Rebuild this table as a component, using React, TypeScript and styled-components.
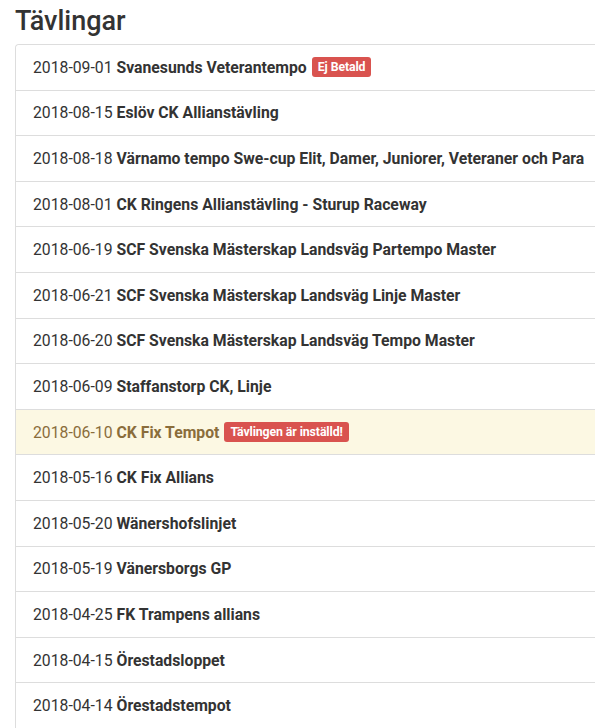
import styled, { createGlobalStyle } from 'styled-components';

const GlobalStyle = createGlobalStyle`
    html, body {
        margin: 0;
        padding: 0;
        background: #fff;
    }
    body {
        font-family: Roboto, "Liberation Sans", sans-serif;
        color: #333;
        overflow: hidden;
    }
`;

const Page = styled.div`
    padding-left: 15px;
    overflow: hidden;
`;

const Title = styled.h2`
    margin: 0;
    padding-top: 1px;
    height: 43px;
    font-size: 27px;
    font-weight: 500;
    line-height: 40px;
    color: #333;
`;

// list runs past the right edge of the window, like in the screenshot
const List = styled.div`
    margin-right: -20px;
    border: 1px solid #ddd;
    border-bottom: none;
    border-radius: 4px 4px 0 0;
`;

const Item = styled.div<{ $warning?: boolean }>`
    display: flex;
    align-items: center;
    gap: 4px;
    height: 44.6px;
    padding: 0 17px;
    border-top: 1px solid #ddd;
    font-size: 15.75px;
    white-space: nowrap;
    background: ${p => (p.$warning ? '#fcf8e3' : '#fff')};
    color: ${p => (p.$warning ? '#8a6d3b' : '#333')};

    &:first-child {
        border-top: none;
        border-radius: 4px 4px 0 0;
    }
`;

const Date = styled.span`
    font-weight: 400;
`;

const Name = styled.strong`
    font-weight: 700;
`;

const Label = styled.span`
    display: inline-block;
    margin-left: 1px;
    padding: 3px 6px;
    border-radius: 3px;
    background: #d9534f;
    color: #fff;
    font-size: 12.3px;
    font-weight: 700;
    letter-spacing: -0.1px;
    line-height: 14px;
`;

interface Race {
    date: string;
    name: string;
    label?: string;
    warning?: boolean;
}

const races: Race[] = [
    { date: '2018-09-01', name: 'Svanesunds Veterantempo', label: 'Ej Betald' },
    { date: '2018-08-15', name: 'Eslöv CK Allianstävling' },
    { date: '2018-08-18', name: 'Värnamo tempo Swe-cup Elit, Damer, Juniorer, Veteraner och Para' },
    { date: '2018-08-01', name: 'CK Ringens Allianstävling - Sturup Raceway' },
    { date: '2018-06-19', name: 'SCF Svenska Mästerskap Landsväg Partempo Master' },
    { date: '2018-06-21', name: 'SCF Svenska Mästerskap Landsväg Linje Master' },
    { date: '2018-06-20', name: 'SCF Svenska Mästerskap Landsväg Tempo Master' },
    { date: '2018-06-09', name: 'Staffanstorp CK, Linje' },
    { date: '2018-06-10', name: 'CK Fix Tempot', label: 'Tävlingen är inställd!', warning: true },
    { date: '2018-05-16', name: 'CK Fix Allians' },
    { date: '2018-05-20', name: 'Wänershofslinjet' },
    { date: '2018-05-19', name: 'Vänersborgs GP' },
    { date: '2018-04-25', name: 'FK Trampens allians' },
    { date: '2018-04-15', name: 'Örestadsloppet' },
    { date: '2018-04-14', name: 'Örestadstempot' },
];

const App: React.FC = () => {
    return (
        <Page>
            <GlobalStyle />
            <Title>Tävlingar</Title>
            <List>
                {races.map(r => (
                    <Item key={r.date + r.name} $warning={r.warning}>
                        <Date>{r.date}</Date>
                        <Name>{r.name}</Name>
                        {r.label && <Label>{r.label}</Label>}
                    </Item>
                ))}
            </List>
        </Page>
    );
};

export default App;
